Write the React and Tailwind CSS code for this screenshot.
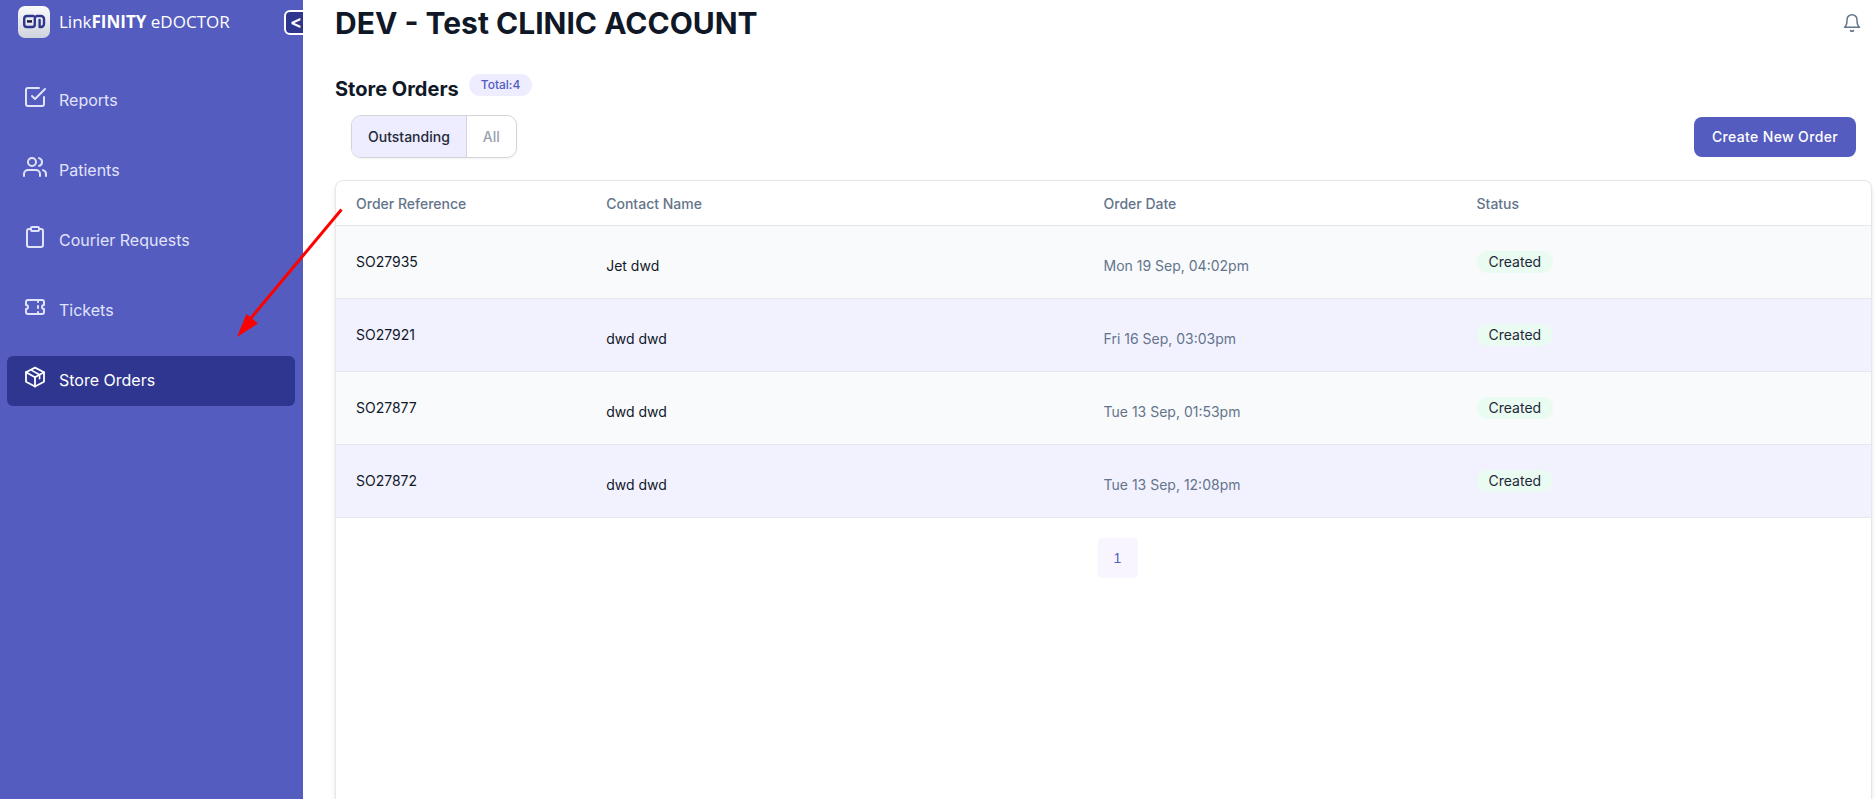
import { FiCheckSquare, FiUsers, FiClipboard, FiBell } from "react-icons/fi";

function TicketIcon({ className }) {
  return (
    <svg viewBox="0 0 24 24" fill="none" stroke="currentColor" strokeWidth="2" strokeLinecap="round" strokeLinejoin="round" className={className} aria-hidden="true">
      <path d="M15 5v2M15 11v2M15 17v2" />
      <path d="M5 5h14a2 2 0 0 1 2 2v3a2 2 0 0 0 0 4v3a2 2 0 0 1-2 2H5a2 2 0 0 1-2-2v-3a2 2 0 0 0 0-4V7a2 2 0 0 1 2-2" />
    </svg>
  );
}

function BoxIcon({ className }) {
  return (
    <svg viewBox="0 0 24 24" fill="none" stroke="currentColor" strokeWidth="1.8" strokeLinecap="round" strokeLinejoin="round" className={className} aria-hidden="true">
      <path d="M12 2.600 21 7.300v9.400l-9 4.800-9-4.800V7.300z" />
      <path d="M3 7.300l9 4.900 9-4.900M12 12.200v9.300" />
      <path d="M7.800 4.900l8.800 4.900v4" strokeWidth="1.600" />
    </svg>
  );
}

const nav = [
  { label: "Reports", Icon: FiCheckSquare },
  { label: "Patients", Icon: FiUsers },
  { label: "Courier Requests", Icon: FiClipboard },
  { label: "Tickets", Icon: TicketIcon },
  { label: "Store Orders", Icon: BoxIcon, active: true },
];

const orders = [
  { ref: "SO27935", contact: "Jet dwd", date: "Mon 19 Sep, 04:02pm", status: "Created" },
  { ref: "SO27921", contact: "dwd dwd", date: "Fri 16 Sep, 03:03pm", status: "Created" },
  { ref: "SO27877", contact: "dwd dwd", date: "Tue 13 Sep, 01:53pm", status: "Created" },
  { ref: "SO27872", contact: "dwd dwd", date: "Tue 13 Sep, 12:08pm", status: "Created" },
];

function Logo() {
  return (
    <svg viewBox="0 0 32 32" className="size-8 shrink-0" aria-hidden="true">
      <defs>
        <linearGradient id="tile" x1="0" y1="0" x2="0" y2="1">
          <stop offset="0" stopColor="#fbfbfb" />
          <stop offset="1" stopColor="#cfd3dc" />
        </linearGradient>
      </defs>
      <rect width="32" height="32" rx="7" fill="url(#tile)" />
      <g fill="none" stroke="#2f3690" strokeWidth="2.4" strokeLinecap="round" strokeLinejoin="round">
        <path d="M15.500 10H9a2.800 2.800 0 0 0-2.800 2.800v5.400A2.800 2.800 0 0 0 9 21h5.200a2.600 2.600 0 0 0 2.600-2.600v-5.800A2.600 2.600 0 0 1 19.400 10H23a3 3 0 0 1 3 3v5a3 3 0 0 1-3 3h-1.400v-7" />
      </g>
      <rect x="9" y="14.200" width="5" height="2.400" fill="#15183a" />
    </svg>
  );
}

function Sidebar() {
  return (
    <aside className="flex w-[303px] shrink-0 flex-col overflow-hidden bg-[#545cbf]">
      <div className="flex items-center pt-[6px] pl-[18px]">
        <Logo />
        <span className="ml-[9px] font-['Open_Sans',sans-serif] text-[17px] leading-8 whitespace-nowrap text-white">
          Link<b>FINITY</b> eDOCTOR
        </span>
        <button type="button" aria-label="Collapse menu" className="-mr-2 ml-auto flex h-[25px] w-[27px] items-center rounded-md border-2 border-white bg-[#2f3690] pl-1 text-lg font-semibold text-white">
          &lt;
        </button>
      </div>
      <nav className="mt-[38px] flex flex-col gap-5 pr-2 pl-[7px]">
        {nav.map(({ label, Icon, active }) => (
          <a
            key={label}
            href="#"
            aria-current={active ? "page" : undefined}
            className={
              active
                ? "flex h-[50px] items-center rounded-md bg-[#2f3690] pl-4 text-white"
                : "flex h-[50px] items-center rounded-md pl-4 text-[#e0e3fb]"
            }
          >
            <Icon className="mb-2 size-6" />
            <span className="mb-[2px] ml-3 text-base">{label}</span>
          </a>
        ))}
      </nav>
    </aside>
  );
}

function OrdersTable() {
  return (
    <table className="w-full table-fixed text-left text-sm">
      <colgroup>
        <col className="w-[16.3%]" />
        <col className="w-[32.4%]" />
        <col className="w-[24.3%]" />
        <col />
      </colgroup>
      <thead>
        <tr className="h-11 border-b border-gray-200 text-[#64748b]">
          {["Order Reference", "Contact Name", "Order Date", "Status"].map((h) => (
            <th key={h} scope="col" className="px-5 pt-[3px] font-medium">{h}</th>
          ))}
        </tr>
      </thead>
      <tbody>
        {orders.map((o) => (
          <tr key={o.ref} className="h-[73px] border-b border-gray-200 odd:bg-[#f8fafc] even:bg-[#f2f2ff]">
            <td className="px-5 text-gray-900">{o.ref}</td>
            <td className="px-5 pt-2 text-gray-900">{o.contact}</td>
            <td className="px-5 pt-2 text-[#64748b]">{o.date}</td>
            <td className="px-5">
              <span className="inline-flex h-[22px] items-center rounded-full bg-[#eafbf1] px-3 text-gray-800">{o.status}</span>
            </td>
          </tr>
        ))}
      </tbody>
    </table>
  );
}

export default function App() {
  return (
    <div className="relative flex min-h-screen bg-white font-['Inter',sans-serif] text-gray-900">
      <Sidebar />
      <main className="flex min-w-0 flex-1 flex-col pr-1 pl-8">
        <header className="flex h-[46px] items-center justify-between pr-[10px]">
          <h1 className="text-3xl font-bold">DEV - Test CLINIC ACCOUNT</h1>
          <button type="button" aria-label="Notifications" className="text-[#64748b]">
            <FiBell className="size-5" strokeWidth={1.8} />
          </button>
        </header>
        <div className="mt-7 flex items-start">
          <h2 className="text-xl leading-[30px] font-bold">Store Orders</h2>
          <span className="ml-[10px] flex h-[22px] items-center rounded-full bg-[#ededff] px-3 text-xs font-medium text-[#545cbf]">Total:4</span>
        </div>
        <div className="mt-[11px] flex items-center justify-between pr-4 pl-4">
          <div className="flex h-[43px] overflow-hidden rounded-[10px] border border-gray-300 text-sm font-medium shadow-xs">
            <button type="button" aria-pressed="true" className="border-r border-gray-300 bg-[#ededff] px-4 text-gray-800">Outstanding</button>
            <button type="button" aria-pressed="false" className="px-4 text-gray-400">All</button>
          </div>
          <button type="button" className="h-10 rounded-lg bg-[#545cbf] px-[18px] text-sm font-medium tracking-wide text-white">Create New Order</button>
        </div>
        <section className="mt-[22px] flex-1 overflow-hidden rounded-t-lg border-x border-t border-gray-200 shadow-md">
          <OrdersTable />
          <nav aria-label="Pagination" className="flex justify-center pt-5 pl-7">
            <button type="button" aria-current="page" className="size-10 rounded bg-[#f8f5ff] font-['Liberation_Sans',sans-serif] text-sm text-[#545cbf]">1</button>
          </nav>
        </section>
      </main>
      <svg viewBox="0 0 108 130" className="pointer-events-none absolute top-[208px] left-[236px] h-[130px] w-[108px]" aria-hidden="true">
        <path d="M105.500 1.500 15 110" stroke="#f00" strokeWidth="3" />
        <path d="M1 129 10.500 106 22 115.500z" fill="#f00" />
      </svg>
    </div>
  );
}
